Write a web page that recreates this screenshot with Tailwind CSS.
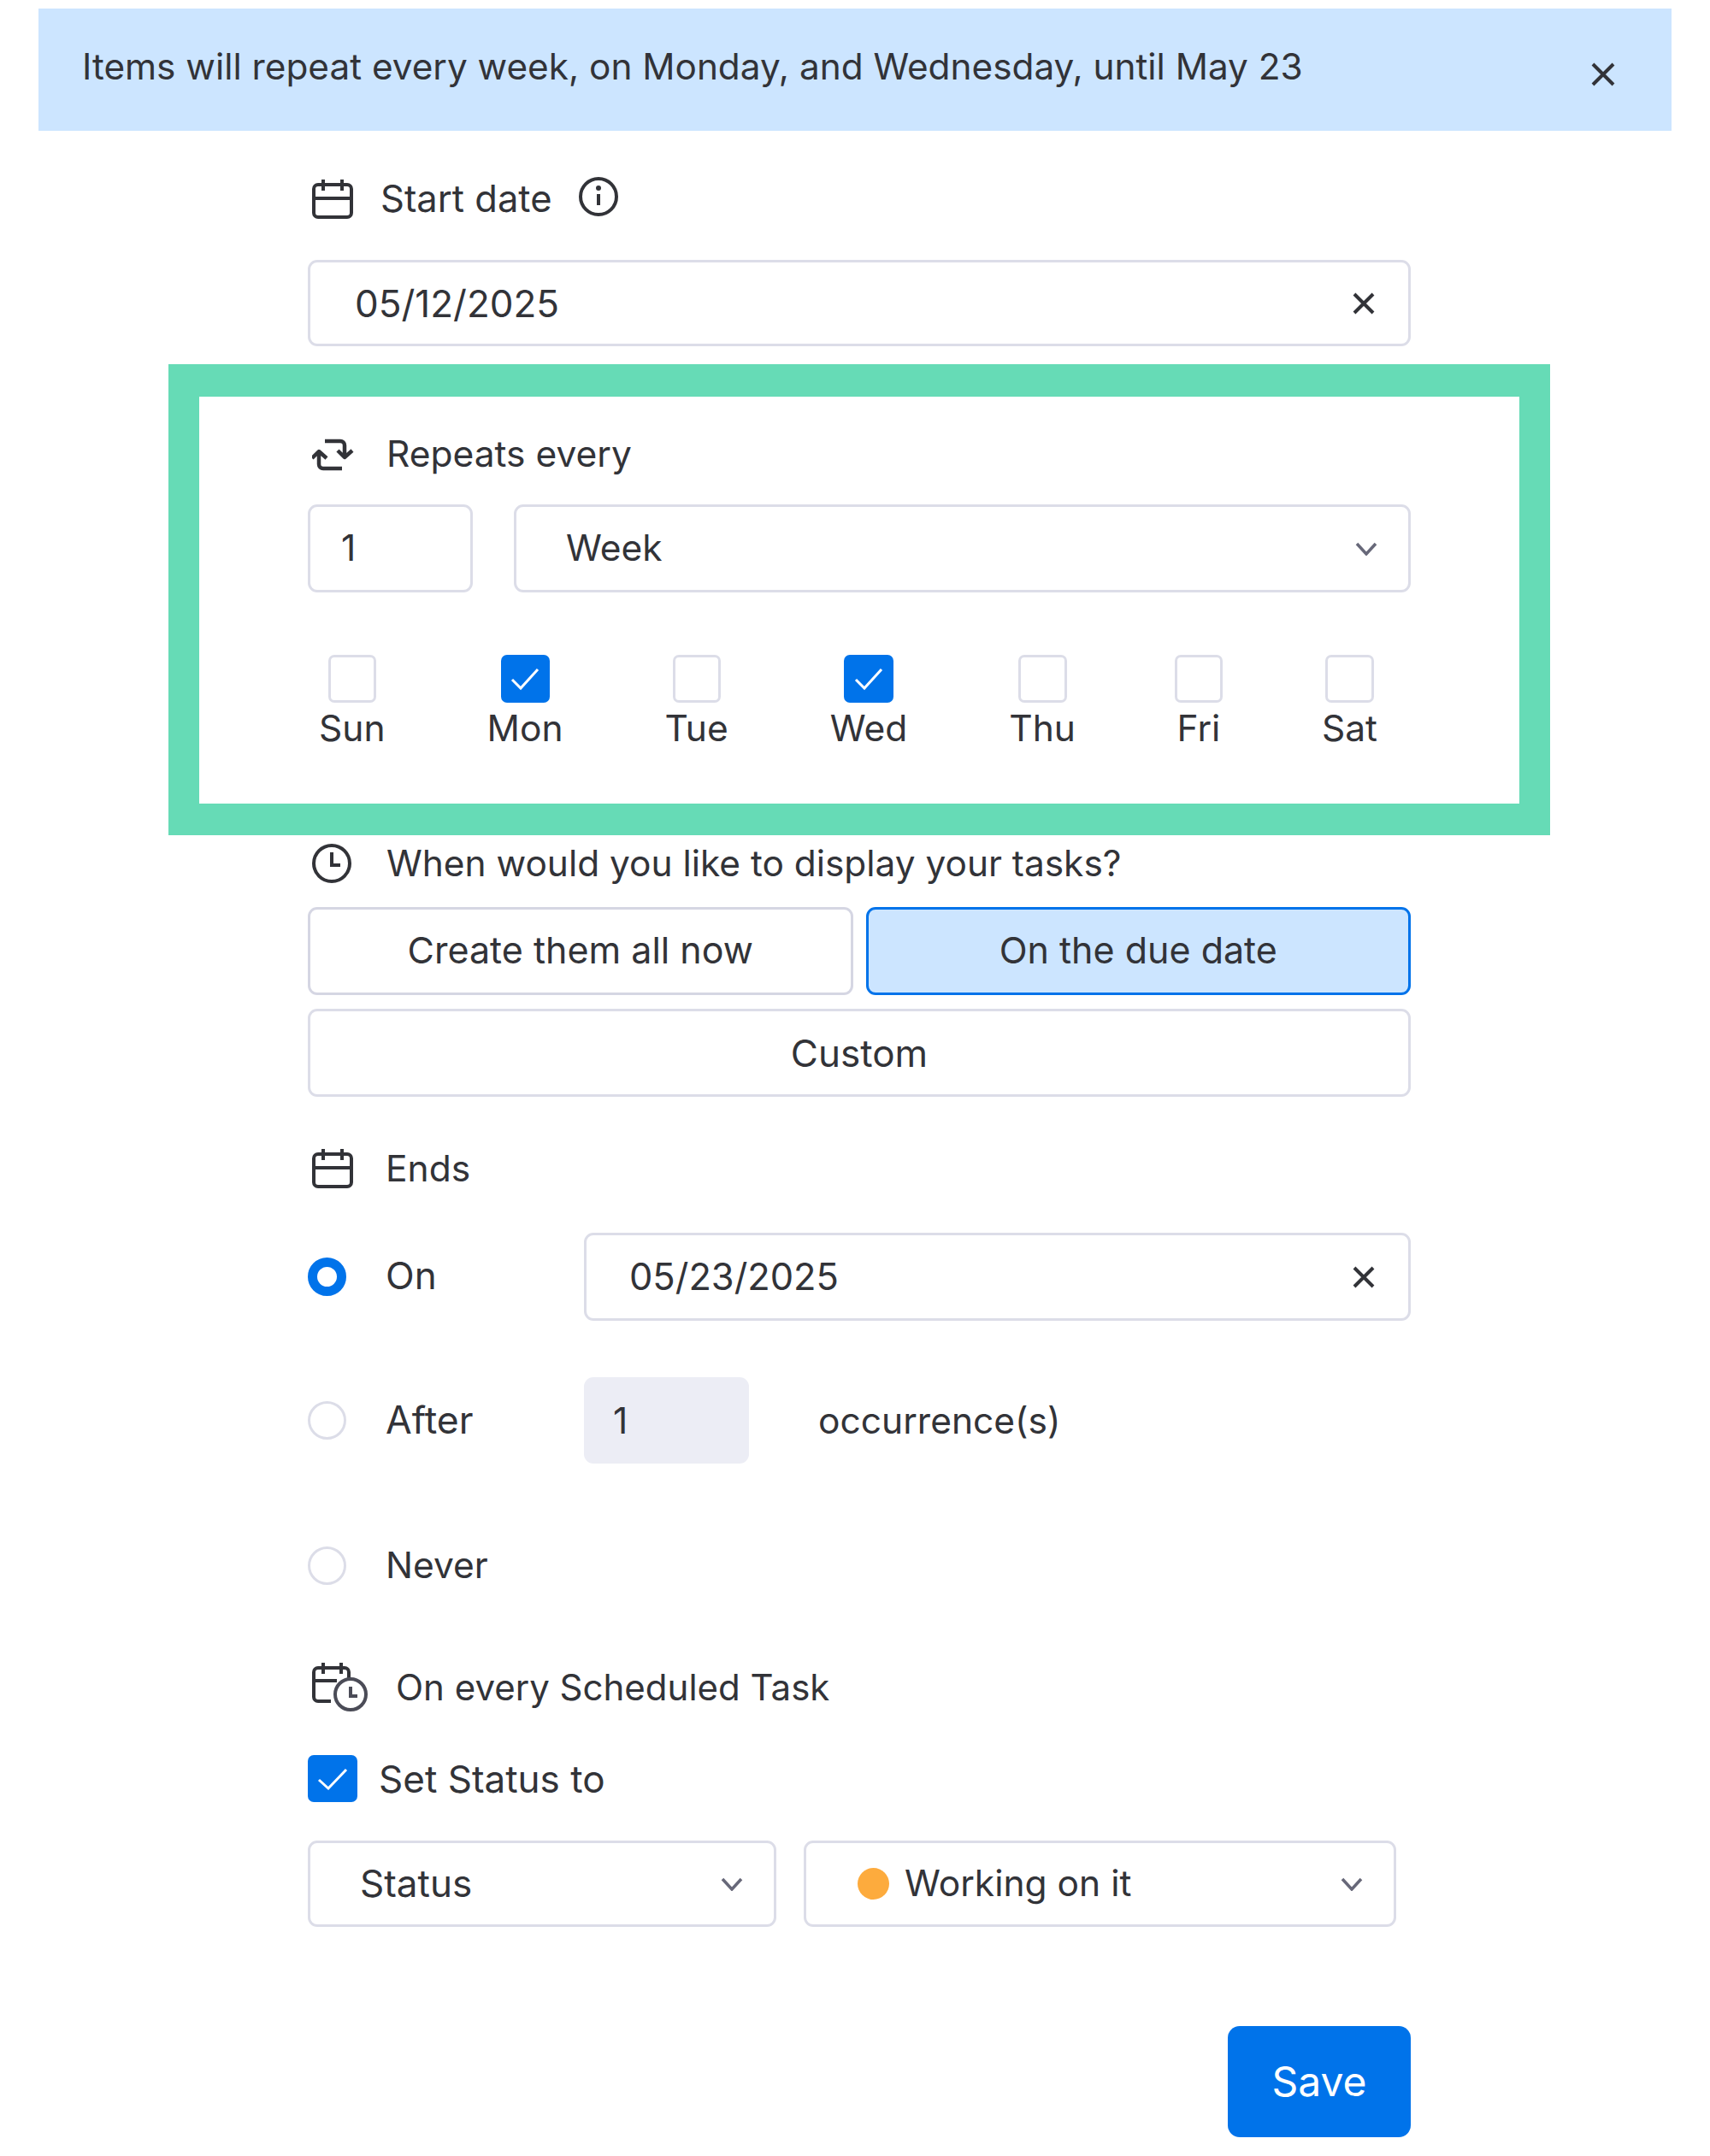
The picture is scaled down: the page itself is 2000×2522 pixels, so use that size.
<!DOCTYPE html>
<html lang="en">
<head>
    <meta charset="UTF-8">
    <title>Recurring tasks</title>
    <script src="https://cdn.jsdelivr.net/npm/@tailwindcss/browser@4"></script>
</head>
<body class="bg-white text-[#323338] font-['Inter',sans-serif] text-[42.5px]">
    <div class="w-[2000px] h-[2522px] pt-[10px] overflow-hidden">
        <!-- banner -->
        <div class="mx-[45px] h-[143px] bg-[#cce5ff] flex items-center justify-between pl-[51px] pr-[66px]">
            <span class="-mt-[8px] text-[42.3px]">Items will repeat every week, on Monday, and Wednesday, until May 23</span>
            <svg class="w-[28px] h-[28px] -mb-[10px]" viewBox="0 0 28 28" fill="none" stroke="#323338" stroke-width="4"><path d="M2 2 26 26M26 2 2 26"/></svg>
        </div>

        <div class="ml-[360px] w-[1290px]">
            <!-- start date -->
            <div class="mt-[56px] h-[48px] flex items-center">
                <svg class="ml-[5px] w-[48px] h-[48px]" viewBox="0 0 48 48" fill="none" stroke="#323338" stroke-width="4"><rect x="2" y="7" width="44" height="38" rx="5"/><path d="M2 23H46M13 1V14M35 1V14"/></svg>
                <span class="ml-[32px] text-[43.5px]">Start date</span>
                <svg class="ml-[31px] w-[46px] h-[46px] -mt-[6px]" viewBox="0 0 46 46" fill="none" stroke="#323338" stroke-width="4"><circle cx="23" cy="23" r="21"/><path d="M23 20V33"/><circle cx="23" cy="13" r="3" fill="#323338" stroke="none"/></svg>
            </div>
            <div class="mt-[47px] h-[101px] border-[3px] border-[#dcdde8] rounded-[11px] flex items-center justify-between pl-[52px] pr-[39px]">
                <span class="text-[44px]">05/12/2025</span>
                <svg class="w-[26px] h-[26px]" viewBox="0 0 26 26" fill="none" stroke="#323338" stroke-width="4"><path d="M2 2 24 24M24 2 2 24"/></svg>
            </div>

            <!-- repeats every, highlighted -->
            <div class="mt-[21px] -ml-[163px] w-[1616px] h-[551px] border-x-[36px] border-t-[38px] border-b-[37px] border-[#66dbb6] pl-[127px] pt-[43px]">
                <div class="h-[48px] flex items-center">
                    <svg class="ml-[5px] w-[50px] h-[40px]" viewBox="0 0 50 40" fill="none" stroke="#323338" stroke-width="4.5" stroke-linejoin="round"><path d="M15 5H33a5 5 0 0 1 5 5V24M30 16 38 24 47 16M35 37H13a5 5 0 0 1-5-5V18M0 25 8 17 17 25"/></svg>
                    <span class="ml-[37px] text-[42.5px]">Repeats every</span>
                </div>
                <div class="mt-[35px] w-[1290px] flex gap-[48px]">
                    <div class="w-[193px] h-[103px] border-[3px] border-[#dcdde8] rounded-[11px] flex items-center pl-[36px] pb-[2px]">1</div>
                    <div class="flex-1 h-[103px] border-[3px] border-[#dcdde8] rounded-[11px] flex items-center justify-between pl-[58px] pr-[36px]">
                        <span class="-mt-[2px]">Week</span>
                        <svg class="w-[26px] h-[16px]" viewBox="0 0 26 16" fill="none" stroke="#676879" stroke-width="3.5"><path d="M2 2 13 14 24 2"/></svg>
                    </div>
                </div>
                <div class="mt-[73px] ml-[13px] flex gap-[119px]">
                    <label class="flex flex-col items-center">
                        <span class="w-[56px] h-[56px] border-[3px] border-[#dcdde8] rounded-[7px]"></span>
                        <span class="-mt-[2px]">Sun</span>
                    </label>
                    <label class="flex flex-col items-center">
                        <span class="w-[57px] h-[56px] bg-[#0073ea] rounded-[7px] flex items-center justify-center">
                            <svg class="w-[34px] h-[28px]" viewBox="0 0 34 28" fill="none" stroke="#fff" stroke-width="3"><path d="M2 15 12 25 32 3"/></svg>
                        </span>
                        <span class="-mt-[2px]">Mon</span>
                    </label>
                    <label class="flex flex-col items-center">
                        <span class="w-[56px] h-[56px] border-[3px] border-[#dcdde8] rounded-[7px]"></span>
                        <span class="-mt-[2px]">Tue</span>
                    </label>
                    <label class="flex flex-col items-center">
                        <span class="w-[58px] h-[56px] bg-[#0073ea] rounded-[7px] flex items-center justify-center">
                            <svg class="w-[34px] h-[28px]" viewBox="0 0 34 28" fill="none" stroke="#fff" stroke-width="3"><path d="M2 15 12 25 32 3"/></svg>
                        </span>
                        <span class="-mt-[2px]">Wed</span>
                    </label>
                    <label class="flex flex-col items-center">
                        <span class="w-[57px] h-[56px] border-[3px] border-[#dcdde8] rounded-[7px]"></span>
                        <span class="-mt-[2px]">Thu</span>
                    </label>
                    <label class="flex flex-col items-center -mx-[3px]">
                        <span class="w-[56px] h-[56px] border-[3px] border-[#dcdde8] rounded-[7px]"></span>
                        <span class="-mt-[2px]">Fri</span>
                    </label>
                    <label class="flex flex-col items-center">
                        <span class="w-[57px] h-[56px] border-[3px] border-[#dcdde8] rounded-[7px]"></span>
                        <span class="-mt-[2px]">Sat</span>
                    </label>
                </div>
            </div>

            <!-- display -->
            <div class="mt-[9px] h-[48px] flex items-center">
                <svg class="ml-[5px] w-[46px] h-[46px]" viewBox="0 0 46 46" fill="none" stroke="#323338" stroke-width="4"><circle cx="23" cy="23" r="21"/><path d="M23 10V25H33"/></svg>
                <span class="ml-[41px] text-[42.4px]">When would you like to display your tasks?</span>
            </div>
            <div class="mt-[27px] grid grid-cols-2 gap-x-[15px] gap-y-[16px] text-[43px]">
                <div class="h-[103px] border-[3px] border-[#d5d6e3] rounded-[11px] flex items-center justify-center pb-[2px]">Create them all now</div>
                <div class="h-[103px] border-[3px] border-[#0073ea] bg-[#cce5ff] rounded-[11px] flex items-center justify-center pb-[2px]">On the due date</div>
                <div class="col-span-2 h-[103px] border-[3px] border-[#dcdde8] rounded-[11px] flex items-center justify-center"><span class="text-[44px]">Custom</span></div>
            </div>

            <!-- ends -->
            <div class="mt-[60px] h-[48px] flex items-center">
                <svg class="ml-[5px] w-[48px] h-[48px]" viewBox="0 0 48 48" fill="none" stroke="#323338" stroke-width="4"><rect x="2" y="7" width="44" height="38" rx="5"/><path d="M2 23H46M13 1V14M35 1V14"/></svg>
                <span class="ml-[38px]">Ends</span>
            </div>
            <div class="mt-[51px] h-[103px] flex items-center">
                <span class="w-[45px] h-[45px] rounded-full border-[11px] border-[#0073ea]"></span>
                <span class="ml-[46px] w-[232px] -mt-[4px] text-[44px]">On</span>
                <div class="flex-1 h-[103px] border-[3px] border-[#dcdde8] rounded-[11px] flex items-center justify-between pl-[50px] pr-[39px]">
                    <span class="text-[43.4px]">05/23/2025</span>
                    <svg class="w-[26px] h-[26px]" viewBox="0 0 26 26" fill="none" stroke="#323338" stroke-width="4"><path d="M2 2 24 24M24 2 2 24"/></svg>
                </div>
            </div>
            <div class="mt-[66px] h-[101px] flex items-center">
                <span class="w-[45px] h-[45px] rounded-full border-[3px] border-[#dcdde8]"></span>
                <span class="ml-[46px] w-[232px] text-[44.5px]">After</span>
                <div class="w-[193px] h-[101px] bg-[#ecedf5] rounded-[11px] flex items-center pl-[34px]">1</div>
                <span class="ml-[81px]">occurrence(s)</span>
            </div>
            <div class="mt-[95px] h-[48px] flex items-center">
                <span class="w-[45px] h-[45px] rounded-full border-[3px] border-[#dcdde8]"></span>
                <span class="ml-[46px]">Never</span>
            </div>

            <!-- scheduled task -->
            <div class="mt-[94px] h-[48px] flex items-center">
                <svg class="ml-[5px] w-[66px] h-[60px]" viewBox="0 0 66 60" fill="none" stroke="#323338" stroke-width="4"><path d="M22 47H7a5 5 0 0 1-5-5V13a5 5 0 0 1 5-5H38a5 5 0 0 1 5 5V21M2 23H29M13 2V15M34 2V15"/><circle cx="45" cy="39" r="18" stroke="#4b4c57"/><path d="M45 30V41H53" stroke="#4b4c57"/></svg>
                <span class="ml-[32px] text-[42px]">On every Scheduled Task</span>
            </div>
            <div class="mt-[56px] h-[55px] flex items-center">
                <span class="w-[58px] h-[55px] bg-[#0073ea] rounded-[7px] flex items-center justify-center">
                    <svg class="w-[36px] h-[28px]" viewBox="0 0 36 28" fill="none" stroke="#fff" stroke-width="3"><path d="M2 15 13 25 34 3"/></svg>
                </span>
                <span class="ml-[25px] text-[44px]">Set Status to</span>
            </div>
            <div class="mt-[45px] flex gap-[32px]">
                <div class="w-[548px] h-[101px] border-[3px] border-[#dcdde8] rounded-[11px] flex items-center justify-between pl-[58px] pr-[36px]">
                    <span class="-mt-[2px] text-[44px]">Status</span>
                    <svg class="w-[26px] h-[16px]" viewBox="0 0 26 16" fill="none" stroke="#676879" stroke-width="3.5"><path d="M2 2 13 14 24 2"/></svg>
                </div>
                <div class="w-[693px] h-[101px] border-[3px] border-[#dcdde8] rounded-[11px] flex items-center pl-[60px] pr-[36px]">
                    <span class="w-[37px] h-[37px] rounded-full bg-[#fdab3d]"></span>
                    <span class="ml-[18px] flex-1 -mt-[2px] text-[42.5px]">Working on it</span>
                    <svg class="w-[26px] h-[16px]" viewBox="0 0 26 16" fill="none" stroke="#676879" stroke-width="3.5"><path d="M2 2 13 14 24 2"/></svg>
                </div>
            </div>
            <div class="mt-[116px] flex justify-end">
                <button class="w-[214px] h-[130px] bg-[#0073ea] text-white rounded-[14px] text-[48px]">Save</button>
            </div>
        </div>
    </div>
</body>
</html>
